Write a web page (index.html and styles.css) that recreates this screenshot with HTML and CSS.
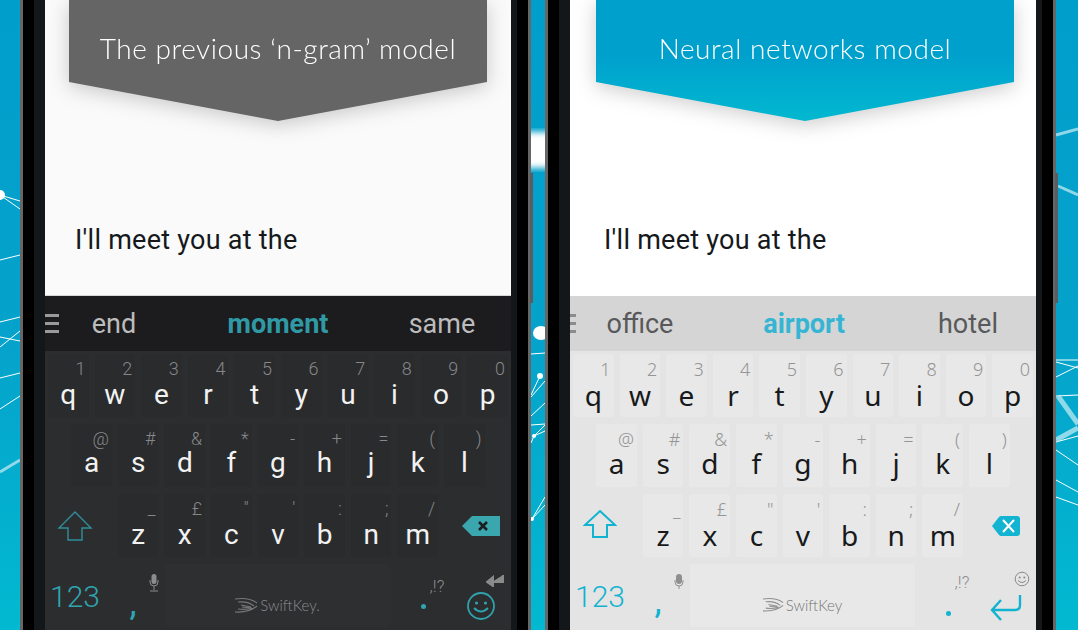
FILE: index.html
```html
<!DOCTYPE html>
<html lang="en">
<head>
  <meta charset="UTF-8">
  <meta name="viewport" content="width=device-width, initial-scale=1.0">
  <title>SwiftKey prediction models</title>
  <link rel="stylesheet" href="styles.css">
</head>
<body>

  <svg class="backdrop" width="1078" height="630" viewBox="0 0 1078 630">
    <defs>
      <filter id="soft"><feGaussianBlur stdDeviation="3"></feGaussianBlur></filter>
    </defs>
    <g stroke="#fff" stroke-width="1" fill="none">
      <path d="M0 195L20 201M0 195L20 209M0 260L20 255M0 322L20 317M0 347L20 331M0 337L20 341M0 378L20 373M0 409L20 396"/>
      <path d="M531 354L545 353M540 376L531 395M545 381L531 397M545 403L531 416M531 425L545 424M534 436L545 425M534 436L531 443M534 436L545 431M532 519L545 497M532 519L545 505"/>
      <path d="M1056 362L1078 368M1056 377L1078 366M1056 360L1078 360M1056 396L1078 395M1056 442L1078 436M1056 450L1078 465M1056 480L1078 492M1056 497L1078 505"/>
    </g>
    <g stroke="#bfeaf3" stroke-width="3" fill="none" opacity="0.75">
      <path d="M0 472L20 460M1056 135L1078 129M1058 186L1078 195"/>
      <path d="M1058 396L1078 424M1056 440L1078 428" stroke-width="5"/>
    </g>
    <g fill="#fff">
      <circle cx="0" cy="195" r="5"/>
      <ellipse cx="541" cy="333" rx="8" ry="7"/>
      <circle cx="540" cy="376" r="3"/>
      <circle cx="534" cy="436" r="2"/>
      <circle cx="532" cy="519" r="2"/>
      <rect x="524" y="132" width="28" height="36" filter="url(#soft)"/>
    </g>
  </svg>

  <div class="phones">

    <div class="phone phone-dark">
      <div class="bezel">
        <div class="screen">
          <div class="upper">
            <div class="banner-wrap">
              <div class="banner">The previous ‘n-gram’ model</div>
            </div>
            <p class="typed">I'll meet you at the</p>
          </div>
          <div class="bar">
            <div class="menu"><i></i><i></i><i></i></div>
            <div class="word">end</div>
            <div class="word word-main">moment</div>
            <div class="word">same</div>
          </div>
          <div class="keys">
            <div class="row">
              <div class="key"><span class="hint">1</span><span class="letter">q</span></div>
              <div class="key"><span class="hint">2</span><span class="letter">w</span></div>
              <div class="key"><span class="hint">3</span><span class="letter">e</span></div>
              <div class="key"><span class="hint">4</span><span class="letter">r</span></div>
              <div class="key"><span class="hint">5</span><span class="letter">t</span></div>
              <div class="key"><span class="hint">6</span><span class="letter">y</span></div>
              <div class="key"><span class="hint">7</span><span class="letter">u</span></div>
              <div class="key"><span class="hint">8</span><span class="letter">i</span></div>
              <div class="key"><span class="hint">9</span><span class="letter">o</span></div>
              <div class="key"><span class="hint">0</span><span class="letter">p</span></div>
            </div>
            <div class="row row-home">
              <div class="key"><span class="hint">@</span><span class="letter">a</span></div>
              <div class="key"><span class="hint">#</span><span class="letter">s</span></div>
              <div class="key"><span class="hint">&amp;</span><span class="letter">d</span></div>
              <div class="key"><span class="hint">*</span><span class="letter">f</span></div>
              <div class="key"><span class="hint">-</span><span class="letter">g</span></div>
              <div class="key"><span class="hint">+</span><span class="letter">h</span></div>
              <div class="key"><span class="hint">=</span><span class="letter">j</span></div>
              <div class="key"><span class="hint">(</span><span class="letter">k</span></div>
              <div class="key"><span class="hint">)</span><span class="letter">l</span></div>
            </div>
            <div class="row">
              <div class="side side-shift">
                <svg width="36" height="32" viewBox="0 0 36 32"><path d="M18 2L34 18H25V30H11V18H2Z" fill="none" stroke="#2f8f9a" stroke-width="1.4"/></svg>
              </div>
              <div class="key"><span class="hint">_</span><span class="letter">z</span></div>
              <div class="key"><span class="hint">£</span><span class="letter">x</span></div>
              <div class="key"><span class="hint">"</span><span class="letter">c</span></div>
              <div class="key"><span class="hint">'</span><span class="letter">v</span></div>
              <div class="key"><span class="hint">:</span><span class="letter">b</span></div>
              <div class="key"><span class="hint">;</span><span class="letter">n</span></div>
              <div class="key"><span class="hint">/</span><span class="letter">m</span></div>
              <div class="side side-del">
                <svg width="38" height="20" viewBox="0 0 38 20"><path d="M0 10L10 0H38V20H10Z" fill="#3aa6ae"/><path d="M17 6L25 14M25 6L17 14" stroke="#1c1d20" stroke-width="2.6"/></svg>
              </div>
            </div>
            <div class="row row-bottom">
              <div class="num">123</div>
              <div class="punct punct-comma">
                <svg class="mic" width="10" height="18" viewBox="0 0 10 18"><rect x="2.5" y="0" width="5" height="10" rx="2.5" fill="#8a8c8e"/><path d="M1 6V8Q1 12 5 12Q9 12 9 8V6M5 12V16M1 17H9" fill="none" stroke="#8a8c8e" stroke-width="1"/></svg>
                <span class="mark">,</span>
              </div>
              <div class="space">
                <svg width="23" height="16" viewBox="0 0 23 16"><path d="M0 2Q14 0 22 6M3 5Q13 4 19 9M6 8L16 10M7 10L16 11M0 15Q14 16 22 9M3 12Q11 13 17 11" fill="none" stroke="#77797b" stroke-width="1.2"/></svg>
                <span class="brand">SwiftKey.</span>
              </div>
              <div class="punct punct-dot">
                <span class="more">,!?</span>
                <span class="dot"></span>
              </div>
              <div class="enter">
                <svg class="enter-small" width="18" height="12" viewBox="0 0 18 12"><path d="M17 0V7H6M7 2L1 7L7 11V2Z" fill="#8a8a8a" stroke="#8a8a8a" stroke-width="2"/></svg>
                <svg class="enter-main" width="28" height="28" viewBox="0 0 28 28"><circle cx="14" cy="14" r="13" fill="none" stroke="#2fa3ad" stroke-width="1.8"/><circle cx="9.5" cy="11" r="1.6" fill="#2fa3ad"/><circle cx="18.5" cy="11" r="1.6" fill="#2fa3ad"/><path d="M7 16Q14 23 21 16" fill="none" stroke="#2fa3ad" stroke-width="1.8"/></svg>
              </div>
            </div>
          </div>
        </div>
      </div>
      <div class="volume"></div>
    </div>

    <div class="phone phone-light">
      <div class="bezel">
        <div class="screen">
          <div class="upper">
            <div class="banner-wrap">
              <div class="banner">Neural networks model</div>
            </div>
            <p class="typed">I'll meet you at the</p>
          </div>
          <div class="bar">
            <div class="menu"><i></i><i></i><i></i></div>
            <div class="word">office</div>
            <div class="word word-main">airport</div>
            <div class="word">hotel</div>
          </div>
          <div class="keys">
            <div class="row">
              <div class="key"><span class="hint">1</span><span class="letter">q</span></div>
              <div class="key"><span class="hint">2</span><span class="letter">w</span></div>
              <div class="key"><span class="hint">3</span><span class="letter">e</span></div>
              <div class="key"><span class="hint">4</span><span class="letter">r</span></div>
              <div class="key"><span class="hint">5</span><span class="letter">t</span></div>
              <div class="key"><span class="hint">6</span><span class="letter">y</span></div>
              <div class="key"><span class="hint">7</span><span class="letter">u</span></div>
              <div class="key"><span class="hint">8</span><span class="letter">i</span></div>
              <div class="key"><span class="hint">9</span><span class="letter">o</span></div>
              <div class="key"><span class="hint">0</span><span class="letter">p</span></div>
            </div>
            <div class="row row-home">
              <div class="key"><span class="hint">@</span><span class="letter">a</span></div>
              <div class="key"><span class="hint">#</span><span class="letter">s</span></div>
              <div class="key"><span class="hint">&amp;</span><span class="letter">d</span></div>
              <div class="key"><span class="hint">*</span><span class="letter">f</span></div>
              <div class="key"><span class="hint">-</span><span class="letter">g</span></div>
              <div class="key"><span class="hint">+</span><span class="letter">h</span></div>
              <div class="key"><span class="hint">=</span><span class="letter">j</span></div>
              <div class="key"><span class="hint">(</span><span class="letter">k</span></div>
              <div class="key"><span class="hint">)</span><span class="letter">l</span></div>
            </div>
            <div class="row">
              <div class="side side-shift">
                <svg width="34" height="30" viewBox="0 0 34 30"><path d="M17 2L32 16H24V28H10V16H2Z" fill="none" stroke="#12b3d0" stroke-width="2"/></svg>
              </div>
              <div class="key"><span class="hint">_</span><span class="letter">z</span></div>
              <div class="key"><span class="hint">£</span><span class="letter">x</span></div>
              <div class="key"><span class="hint">"</span><span class="letter">c</span></div>
              <div class="key"><span class="hint">'</span><span class="letter">v</span></div>
              <div class="key"><span class="hint">:</span><span class="letter">b</span></div>
              <div class="key"><span class="hint">;</span><span class="letter">n</span></div>
              <div class="key"><span class="hint">/</span><span class="letter">m</span></div>
              <div class="side side-del">
                <svg width="28" height="20" viewBox="0 0 28 20"><path d="M0 10L7 1Q8 0 9 0H25Q28 0 28 3V17Q28 20 25 20H9Q8 20 7 19Z" fill="#12b4d2"/><path d="M11 4L22 16M22 4L11 16" stroke="#fff" stroke-width="2"/></svg>
              </div>
            </div>
            <div class="row row-bottom">
              <div class="num">123</div>
              <div class="punct punct-comma">
                <svg class="mic" width="10" height="16" viewBox="0 0 10 16"><rect x="2" y="0" width="6" height="10" rx="3" fill="#8f8f8f"/><path d="M1 6V8Q1 12 5 12Q9 12 9 8V6M5 12V15" fill="none" stroke="#8f8f8f" stroke-width="1"/></svg>
                <span class="mark">,</span>
              </div>
              <div class="space">
                <svg width="21" height="15" viewBox="0 0 23 16"><path d="M0 2Q14 0 22 6M3 5Q13 4 19 9M6 8L16 10M7 10L16 11M0 15Q14 16 22 9M3 12Q11 13 17 11" fill="none" stroke="#8f8f8f" stroke-width="1.2"/></svg>
                <span class="brand">SwiftKey</span>
              </div>
              <div class="punct punct-dot">
                <span class="more">,!?</span>
                <span class="dot"></span>
              </div>
              <div class="enter">
                <svg class="enter-small" width="16" height="16" viewBox="0 0 16 16"><circle cx="8" cy="8" r="6.8" fill="none" stroke="#8a8a8a"/><circle cx="5.7" cy="6.5" r="1" fill="#8a8a8a"/><circle cx="10.3" cy="6.5" r="1" fill="#8a8a8a"/><path d="M4 9.5Q8 13.5 12 9.5" fill="none" stroke="#8a8a8a"/></svg>
                <svg class="enter-main" width="32" height="26" viewBox="0 0 32 26"><path d="M30 0V10Q30 15 25 15H3M11 5L2 15L11 25" fill="none" stroke="#12b3d0" stroke-width="2.4"/></svg>
              </div>
            </div>
          </div>
        </div>
      </div>
      <div class="volume"></div>
    </div>

  </div>

</body>
</html>
```

FILE: styles.css
```css
html, body {
  margin: 0;
  padding: 0;
}
body {
  position: relative;
  width: 1078px;
  height: 630px;
  overflow: hidden;
  background: linear-gradient(to bottom, #009ecb 0%, #05a3cb 55%, #02b9d1 100%);
  font-family: Roboto, sans-serif;
}
.backdrop {
  position: absolute;
  top: 0;
  left: 0;
}
.phones {
  position: relative;
  display: flex;
  gap: 14px;
  padding-left: 20px;
}

/* phone shell */
.phone {
  position: relative;
  height: 630px;
  padding: 0 11px;
  background: #000;
  border-left: 3px solid #666;
  border-right: 3px solid #666;
}
.bezel {
  height: 630px;
  padding: 0 6px 0 11px;
  background: #14171a;
}
.volume {
  position: absolute;
  top: 173px;
  right: -5px;
  width: 3px;
  height: 130px;
  background: #5a5d60;
}
.screen {
  display: flex;
  flex-direction: column;
  width: 466px;
  height: 630px;
  overflow: hidden;
}

/* top half */
.upper {
  height: 296px;
  flex: none;
  box-sizing: border-box;
}
.phone-dark .upper {
  background: #fafafa;
  padding-left: 24px;
  border-bottom: 1px solid #d8d8d8;
}
.phone-light .upper {
  background: #fff;
  padding-left: 26px;
}
.banner-wrap {
  width: 418px;
  height: 121px;
  filter: drop-shadow(0 4px 10px rgba(0, 0, 0, 0.2));
}
.banner {
  box-sizing: border-box;
  height: 121px;
  padding-top: 30px;
  text-align: center;
  font-family: Lato, sans-serif;
  font-weight: 300;
  font-size: 28px;
  letter-spacing: 0.55px;
  line-height: 36px;
  color: #fff;
  clip-path: polygon(0 0, 100% 0, 100% 82px, 50% 100%, 0 82px);
}
.phone-dark .banner {
  background: #656565;
}
.phone-light .banner {
  background: linear-gradient(to bottom, #00a0cd 0%, #00a0cd 45%, #02b8d0 100%);
}
.typed {
  margin: 101px 0 0 6px;
  font-size: 27px;
  letter-spacing: 0.25px;
  line-height: 36px;
  color: #15191c;
}
.phone-light .typed {
  margin-left: 8px;
}

/* suggestion bar */
.bar {
  display: flex;
  align-items: center;
  height: 55px;
  flex: none;
}
.phone-dark .bar {
  background: #1c1c1e;
  color: #bcbcbc;
}
.phone-light .bar {
  background: #d5d5d5;
  color: #58595b;
}
.menu {
  display: flex;
  flex-direction: column;
  gap: 5px;
  width: 14px;
  flex: none;
}
.menu i {
  height: 3px;
  background: #9a9a9a;
}
.phone-light .menu {
  margin: 0 9px 0 -8px;
}
.phone-light .menu i {
  background: #8c8c8c;
}
.word {
  width: 110px;
  flex: none;
  text-align: center;
  font-size: 27px;
  line-height: 36px;
}
.word + .word {
  margin-left: 54px;
}
.word-main {
  font-weight: 700;
}
.phone-dark .word-main {
  color: #2f9aa5;
}
.phone-light .word-main {
  color: #35b5d3;
}

/* keyboard */
.keys {
  flex: 1;
  display: flex;
  flex-direction: column;
  gap: 7px;
  padding-top: 3px;
}
.phone-dark .keys {
  background: #2c2d2f;
}
.phone-light .keys {
  background: #e4e4e4;
}
.row {
  display: flex;
  height: 63px;
  flex: none;
}
.row-home {
  padding-left: 23.3px;
}
.key {
  width: 40.6px;
  margin: 0 3px;
  flex: none;
  display: flex;
  flex-direction: column;
  border-radius: 3px;
}
.phone-dark .key {
  background: #2a2b2d;
}
.phone-dark .space {
  background: #2e2f31;
}
.phone-light .key,
.phone-light .space {
  background: #e8e8e8;
}
.hint {
  height: 22px;
  padding: 4px 3px 0 0;
  text-align: right;
  font-size: 18px;
  font-weight: 300;
  line-height: 22px;
}
.letter {
  margin-top: 1px;
  text-align: center;
  font-size: 28px;
  line-height: 28px;
}
.row-home .hint {
  height: 20px;
  padding-top: 5px;
  line-height: 20px;
}
.row-home .letter {
  margin-top: 0;
}
.phone-dark .hint {
  color: #85878a;
}
.phone-dark .letter {
  color: #f2f2f2;
}
.phone-light .hint {
  color: #949494;
  font-family: "Noto Sans", sans-serif;
}
.phone-light .letter {
  color: #17191b;
  font-family: "Noto Sans", sans-serif;
}
.side {
  flex: none;
  display: flex;
  align-items: center;
  justify-content: center;
  box-sizing: border-box;
}
.side-shift {
  width: 69.9px;
  padding-right: 10px;
}
.phone-light .side-shift {
  padding-bottom: 3px;
}
.side-del {
  width: 70px;
  padding-left: 10px;
}

/* bottom row */
.row-bottom {
  align-items: stretch;
}
.num {
  width: 60px;
  flex: none;
  text-align: center;
  font-size: 30px;
  font-weight: 300;
  line-height: 66px;
}
.phone-dark .num,
.phone-dark .mark {
  color: #2fa5b0;
}
.phone-light .num,
.phone-light .mark {
  color: #12b3d0;
}
.punct {
  width: 56px;
  flex: none;
  display: flex;
  flex-direction: column;
}
.punct-comma .mic {
  align-self: flex-end;
  margin: 10px 2px 0 0;
}
.mark {
  margin-top: -4px;
  text-align: center;
  font-size: 36px;
  font-weight: 400;
  line-height: 30px;
}
.space {
  width: 225px;
  margin: 0 4px;
  flex: none;
  display: flex;
  align-items: center;
  justify-content: center;
  gap: 2px;
  padding-top: 18px;
  box-sizing: border-box;
  border-radius: 3px;
}
.brand {
  font-family: Lato, sans-serif;
  font-size: 15px;
  font-weight: 300;
  color: #8b8d8f;
}
.phone-light .brand {
  color: #757575;
}
.punct-dot {
  width: 58px;
  align-items: center;
}
.more {
  margin: 8px 0 0 28px;
  font-size: 17px;
  font-weight: 300;
  line-height: 20px;
}
.phone-dark .more {
  color: #8a8c8e;
  margin-top: 12px;
}
.phone-light .more {
  color: #8c8c8c;
}
.dot {
  width: 5px;
  height: 5px;
  border-radius: 50%;
}
.phone-dark .dot {
  background: #2fa5b0;
  margin-top: 8px;
}
.phone-light .dot {
  background: #12b3d0;
  margin-top: 19px;
}
.enter {
  width: 59px;
  flex: none;
  display: flex;
  flex-direction: column;
  align-items: center;
}
.enter-small {
  align-self: flex-end;
  margin: 11px 7px 0 0;
}
.phone-dark .enter-main {
  margin: 5px 2px 0 0;
}
.phone-light .enter-small {
  margin: 7px 6px 0 0;
}
.phone-light .enter-main {
  margin: 8px 0 0 -2px;
}
```
